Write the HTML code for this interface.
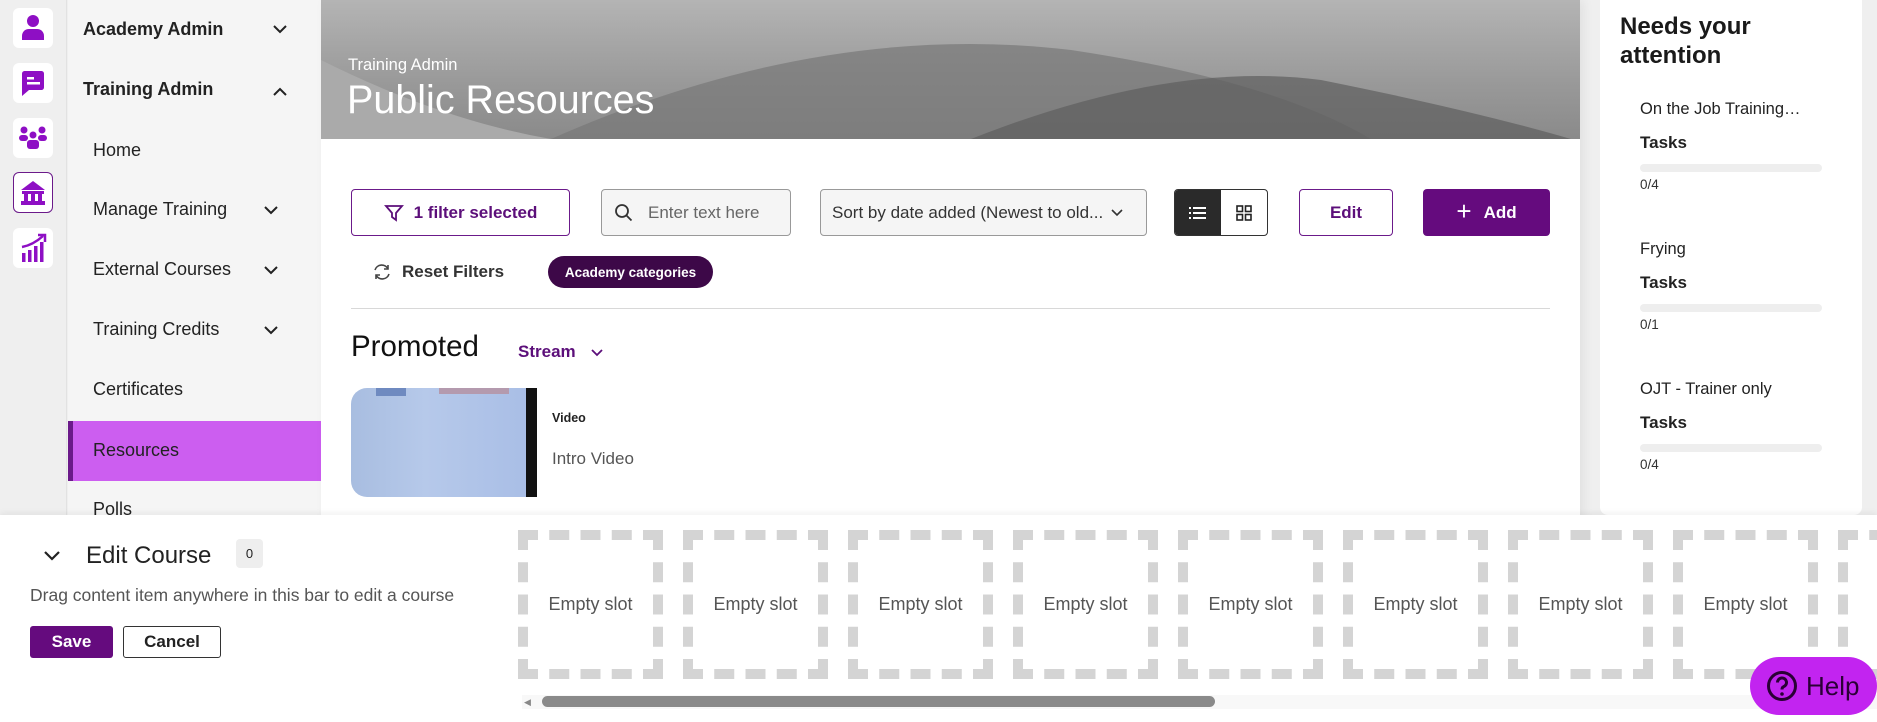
<!DOCTYPE html>
<html><head><meta charset="utf-8"><style>
*{box-sizing:border-box;margin:0;padding:0}
body{width:1877px;height:722px;overflow:hidden;font-family:"Liberation Sans",Arial,sans-serif;background:#efefef;position:relative;color:#222}
.abs{position:absolute}
.rail{left:0;top:0;width:67px;height:722px;background:#efefef;border-right:1px solid #e2e2e2}
.ic{position:absolute;left:13px;width:40px;height:40px;background:#fff;border-radius:6px;display:flex;align-items:center;justify-content:center}
.side{left:68px;top:0;width:253px;height:722px;background:#f5f5f5}
.si{position:absolute;left:0;width:253px;font-size:18px;color:#222}
.chev{position:absolute}
.main{left:321px;top:0;width:1259px;height:722px;background:#fff;box-shadow:4px 0 10px rgba(0,0,0,.06)}
.btn{position:absolute;top:189px;height:47px;border-radius:4px;display:flex;align-items:center;justify-content:center;font-size:17px;font-weight:bold}
.card{left:1600px;top:0;width:262px;height:515px;background:#fff;border-radius:0 0 8px 8px}
.it{position:absolute;left:40px;font-size:16.5px}
.tk{position:absolute;left:40px;font-size:17px;font-weight:bold}
.bar{position:absolute;left:40px;width:182px;height:8px;border-radius:4px;background:#eee}
.n{position:absolute;left:40px;font-size:13.5px;color:#333}
.bottom{left:0;top:515px;width:1877px;height:207px;background:#fff;box-shadow:0 -2px 6px rgba(0,0,0,.06)}
.slot{position:absolute;top:15px;width:145px;height:149px;border:10px dashed #d4d4d4;display:flex;align-items:center;justify-content:center;font-size:18px;color:#555}
</style></head><body>
<div class="abs rail">
 <div class="ic" style="top:8px"><svg width="26" height="28" viewBox="0 0 26 28"><circle cx="13" cy="7" r="6" fill="#8e0fc4"/><path d="M2 26v-4c0-4 3-7 7-7h8c4 0 7 3 7 7v4z" fill="#8e0fc4"/></svg></div>
 <div class="ic" style="top:63px"><svg width="28" height="28" viewBox="0 0 28 28"><path d="M3 5c0-2 1-3 3-3h16c2 0 3 1 3 3v13c0 2-1 3-3 3H10l-7 6z" fill="#8e0fc4"/><rect x="8" y="8" width="7" height="2.5" fill="#fff"/><rect x="8" y="13" width="13" height="2.5" fill="#fff"/></svg></div>
 <div class="ic" style="top:118px"><svg width="30" height="26" viewBox="0 0 30 26"><g fill="#8e0fc4"><circle cx="6" cy="5" r="3.5"/><circle cx="24" cy="5" r="3.5"/><circle cx="15" cy="10" r="3.5"/><rect x="1" y="10" width="9" height="6" rx="3"/><rect x="20" y="10" width="9" height="6" rx="3"/><rect x="9" y="15" width="12" height="9" rx="3"/></g></svg></div>
 <div class="ic" style="top:172px;height:41px;border:1.5px solid #6b1a8a"><svg width="28" height="28" viewBox="0 0 28 28"><g fill="#8e0fc4"><path d="M14 2L2 11h24z"/><rect x="3" y="12" width="22" height="3"/><rect x="5" y="15" width="4" height="7"/><rect x="12" y="15" width="4" height="7"/><rect x="19" y="15" width="4" height="7"/><rect x="2" y="22" width="24" height="4"/></g></svg></div>
 <div class="ic" style="top:228px"><svg width="28" height="30" viewBox="0 0 28 30"><g fill="#8e0fc4"><rect x="3" y="20" width="3.5" height="9"/><rect x="9" y="17" width="3.5" height="12"/><rect x="15" y="13" width="3.5" height="16"/><rect x="21" y="9" width="3.5" height="20"/></g><path d="M3 14 Q14 12 24 3" stroke="#8e0fc4" stroke-width="2.5" fill="none"/><path d="M19 2h7v7" stroke="#8e0fc4" stroke-width="2.5" fill="none"/></svg></div>
</div>
<div class="abs side">
 <div class="si" style="top:19px;left:15px;font-weight:bold">Academy Admin</div>
 <svg class="chev" style="left:205px;top:25px" width="14" height="9"><path d="M1 1l6 6 6-6" fill="none" stroke="#222" stroke-width="2"/></svg>
 <div class="si" style="top:79px;left:15px;font-weight:bold">Training Admin</div>
 <svg class="chev" style="left:205px;top:87px" width="14" height="9"><path d="M1 8l6-6 6 6" fill="none" stroke="#222" stroke-width="2"/></svg>
 <div class="si" style="top:140px;left:25px">Home</div>
 <div class="si" style="top:199px;left:25px">Manage Training</div>
 <svg class="chev" style="left:196px;top:206px" width="14" height="9"><path d="M1 1l6 6 6-6" fill="none" stroke="#222" stroke-width="2"/></svg>
 <div class="si" style="top:259px;left:25px">External Courses</div>
 <svg class="chev" style="left:196px;top:266px" width="14" height="9"><path d="M1 1l6 6 6-6" fill="none" stroke="#222" stroke-width="2"/></svg>
 <div class="si" style="top:319px;left:25px">Training Credits</div>
 <svg class="chev" style="left:196px;top:326px" width="14" height="9"><path d="M1 1l6 6 6-6" fill="none" stroke="#222" stroke-width="2"/></svg>
 <div class="si" style="top:379px;left:25px">Certificates</div>
 <div class="abs" style="left:0;top:421px;width:253px;height:60px;background:#cc5ef0;border-left:5px solid #6b1a8a"></div>
 <div class="si" style="top:440px;left:25px">Resources</div>
 <div class="si" style="top:499px;left:25px">Polls</div>
</div>
<div class="abs main">
 <div class="abs" style="left:0;top:0;width:1259px;height:139px;overflow:hidden;background:linear-gradient(180deg,#b4b4b4,#999 60%,#8a8a8a)">
  <svg class="abs" style="left:0;top:0" width="1259" height="139"><path d="M0 60 Q120 120 230 139 L0 139z" fill="#aaa"/><path d="M230 139 Q500 20 750 50 Q950 80 1050 139z" fill="#777" opacity=".7"/><path d="M650 139 Q850 60 1000 80 Q1150 110 1250 139z" fill="#5e5e5e" opacity=".7"/></svg>
  <div class="abs" style="left:27px;top:56px;color:#fff;font-size:16.5px">Training Admin</div>
  <div class="abs" style="left:26px;top:78px;color:#fff;font-size:39.5px">Public Resources</div>
 </div>
 <div class="btn" style="left:30px;width:219px;border:1.5px solid #6b1a8a;color:#5c0f7a"><svg width="20" height="20" viewBox="0 0 20 20" style="margin-right:10px"><path d="M2 3h16l-6 7v7l-4-3v-4z" fill="none" stroke="#5c0f7a" stroke-width="1.8"/></svg>1 filter selected</div>
 <div class="btn" style="left:280px;width:190px;border:1px solid #999;background:#f5f5f5;font-weight:normal;color:#666;justify-content:flex-start;padding-left:12px"><svg width="20" height="20" viewBox="0 0 20 20" style="margin-right:14px"><circle cx="8" cy="8" r="6" fill="none" stroke="#333" stroke-width="1.8"/><path d="M12.5 12.5l5 5" stroke="#333" stroke-width="1.8"/></svg>Enter text here</div>
 <div class="btn" style="left:499px;width:327px;border:1px solid #999;background:#f5f5f5;font-weight:normal;color:#333;justify-content:flex-start;padding-left:11px">Sort by date added (Newest to old...<svg width="12" height="8" style="margin-left:8px"><path d="M1 1l5 5 5-5" fill="none" stroke="#333" stroke-width="1.6"/></svg></div>
 <div class="btn" style="left:853px;width:94px;border:1px solid #333;overflow:hidden">
  <div style="width:47px;height:100%;background:#2a2a2a;display:flex;align-items:center;justify-content:center"><svg width="18" height="14"><g fill="#fff"><rect x="0" y="1" width="2" height="2"/><rect x="0" y="6" width="2" height="2"/><rect x="0" y="11" width="2" height="2"/><rect x="4" y="1" width="13" height="2"/><rect x="4" y="6" width="13" height="2"/><rect x="4" y="11" width="13" height="2"/></g></svg></div>
  <div style="width:47px;height:100%;display:flex;align-items:center;justify-content:center"><svg width="16" height="16"><g fill="none" stroke="#222" stroke-width="1.6"><rect x="1" y="1" width="5.5" height="5.5"/><rect x="9.5" y="1" width="5.5" height="5.5"/><rect x="1" y="9.5" width="5.5" height="5.5"/><rect x="9.5" y="9.5" width="5.5" height="5.5"/></g></svg></div>
 </div>
 <div class="btn" style="left:978px;width:94px;border:1.5px solid #6b1a8a;color:#5c0f7a">Edit</div>
 <div class="btn" style="left:1102px;width:127px;background:#650b7e;color:#fff"><span style="font-size:26px;font-weight:normal;margin-right:12px;margin-top:-3px">+</span>Add</div>
 <div class="abs" style="left:51px;top:262px;font-size:17px;font-weight:bold;color:#333;display:flex;align-items:center"><svg width="20" height="20" viewBox="0 0 20 20" style="margin-right:10px"><path d="M16 7A7 7 0 0 0 3 8M4 13a7 7 0 0 0 13-1" fill="none" stroke="#444" stroke-width="1.6"/><path d="M16 3v4h-4M4 17v-4h4" fill="none" stroke="#444" stroke-width="1.6"/></svg>Reset Filters</div>
 <div class="abs" style="left:227px;top:256px;width:165px;height:32px;border-radius:16px;background:#3d0848;color:#fff;font-size:13.5px;font-weight:bold;display:flex;align-items:center;justify-content:center">Academy categories</div>
 <div class="abs" style="left:30px;top:308px;width:1199px;height:1px;background:#d8d8d8"></div>
 <div class="abs" style="left:30px;top:330px;font-size:29.5px;color:#111">Promoted</div>
 <div class="abs" style="left:197px;top:342px;font-size:17px;font-weight:bold;color:#5c0f7a">Stream</div>
 <svg class="abs" style="left:270px;top:349px" width="12" height="8"><path d="M1 1l5 5 5-5" fill="none" stroke="#5c0f7a" stroke-width="1.8"/></svg>
 <div class="abs" style="left:30px;top:388px;width:186px;height:109px;border-radius:16px 0 0 16px;overflow:hidden;background:linear-gradient(90deg,#a8bde0,#b6c9ea 40%,#a9bee6 95%)">
  <div class="abs" style="left:175px;top:0;width:11px;height:109px;background:#111"></div>
  <div class="abs" style="left:25px;top:0;width:30px;height:8px;background:#6f8ac0"></div>
  <div class="abs" style="left:88px;top:0;width:70px;height:6px;background:#b49aae"></div>
 </div>
 <div class="abs" style="left:231px;top:411px;font-size:12.5px;font-weight:bold">Video</div>
 <div class="abs" style="left:231px;top:449px;font-size:17px;color:#555">Intro Video</div>
</div>
<div class="abs card">
 <div class="abs" style="left:20px;top:12px;font-size:24px;font-weight:bold;line-height:29px;color:#1a1a1a">Needs your<br>attention</div>
 <div class="it" style="top:100px">On the Job Training…</div><div class="tk" style="top:133px">Tasks</div><div class="bar" style="top:164px"></div><div class="n" style="top:177px">0/4</div>
 <div class="it" style="top:240px">Frying</div><div class="tk" style="top:273px">Tasks</div><div class="bar" style="top:304px"></div><div class="n" style="top:317px">0/1</div>
 <div class="it" style="top:380px">OJT - Trainer only</div><div class="tk" style="top:413px">Tasks</div><div class="bar" style="top:444px"></div><div class="n" style="top:457px">0/4</div>
</div>
<div class="abs bottom">
 <svg class="abs" style="left:44px;top:36px" width="16" height="10"><path d="M1 1l7 7 7-7" fill="none" stroke="#222" stroke-width="2.2"/></svg>
 <div class="abs" style="left:86px;top:27px;font-size:24px;color:#222">Edit Course</div>
 <div class="abs" style="left:236px;top:24px;width:27px;height:29px;background:#eee;border-radius:4px;font-size:13px;display:flex;align-items:center;justify-content:center">0</div>
 <div class="abs" style="left:30px;top:70px;font-size:17.5px;color:#555">Drag content item anywhere in this bar to edit a course</div>
 <div class="abs" style="left:30px;top:111px;width:83px;height:32px;background:#650b7e;color:#fff;border-radius:3px;font-weight:bold;font-size:17px;display:flex;align-items:center;justify-content:center">Save</div>
 <div class="abs" style="left:123px;top:111px;width:98px;height:32px;border:1.5px solid #333;border-radius:3px;font-weight:bold;font-size:17px;display:flex;align-items:center;justify-content:center">Cancel</div>
 <div class="slot" style="left:518px">Empty slot</div>
 <div class="slot" style="left:683px">Empty slot</div>
 <div class="slot" style="left:848px">Empty slot</div>
 <div class="slot" style="left:1013px">Empty slot</div>
 <div class="slot" style="left:1178px">Empty slot</div>
 <div class="slot" style="left:1343px">Empty slot</div>
 <div class="slot" style="left:1508px">Empty slot</div>
 <div class="slot" style="left:1673px">Empty slot</div>
 <div class="slot" style="left:1838px"></div>
 <div class="abs" style="left:522px;top:180px;width:1355px;height:14px;background:#f8f8f8"></div>
 <div class="abs" style="left:524px;top:182px;font-size:9px;color:#888">◀</div>
 <div class="abs" style="left:542px;top:181px;width:673px;height:11px;border-radius:6px;background:#8a8a8a"></div>
 <div class="abs" style="left:1750px;top:142px;width:127px;height:58px;border-radius:29px;background:#c224f0;display:flex;align-items:center;padding-left:16px;font-size:26px;color:#2a0035"><svg width="32" height="32" viewBox="0 0 32 32" style="margin-right:8px"><circle cx="16" cy="16" r="13.5" fill="none" stroke="#2a0035" stroke-width="3"/><path d="M11.5 12.5a4.5 4.5 0 1 1 6 4.2c-1.2.5-1.5 1.3-1.5 2.8" fill="none" stroke="#2a0035" stroke-width="3"/><circle cx="16" cy="24" r="1.8" fill="#2a0035"/></svg>Help</div>
</div>
</body></html>
